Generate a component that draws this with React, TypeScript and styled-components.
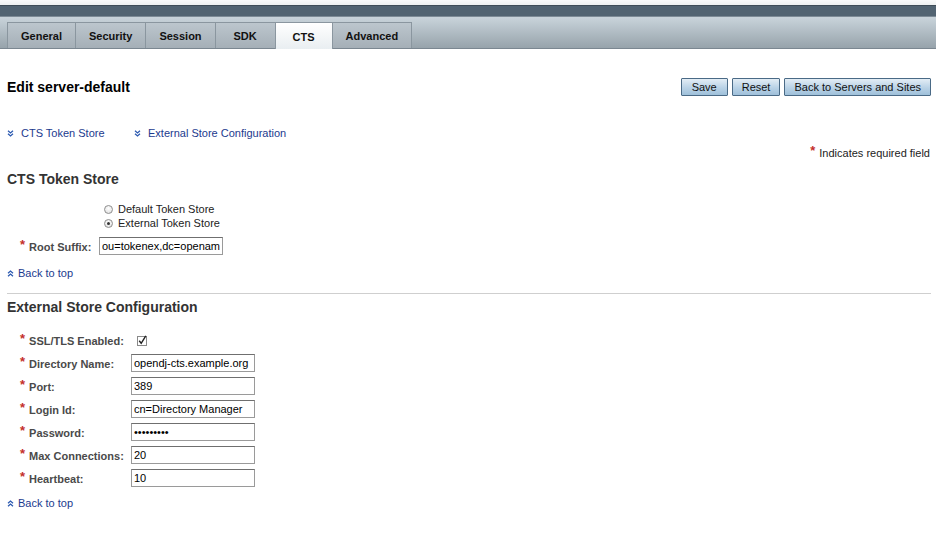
import React from "react";
import styled, { createGlobalStyle } from "styled-components";

const Global = createGlobalStyle`
  html, body { margin: 0; padding: 0; background: #fff; }
  body { font-family: "Liberation Sans", Arial, Helvetica, sans-serif; font-size: 11px; color: #000; }
`;

const Masthead = styled.div`
  height: 5px;
  background: linear-gradient(#fafbfb, #eef1f1);
`;

const DarkBand = styled.div`
  height: 10px;
  background: #526472;
  border-top: 1px solid #3f4d58;
`;

const TabBar = styled.div`
  height: 33px;
  box-sizing: border-box;
  background: linear-gradient(#c9d4db, #97a3ab);
  border-top: 1px solid #7d8b96;
  border-bottom: 1px solid #7b8791;
  padding-left: 7px;
  display: flex;
  align-items: flex-end;
`;

const Tab = styled.div<{ $active?: boolean }>`
  height: ${(p) => (p.$active ? "27px" : "26px")};
  margin-bottom: ${(p) => (p.$active ? "-1px" : "0")};
  box-sizing: border-box;
  padding: 0 13px;
  min-width: ${(p) => (p.$active ? "58px" : "61px")};
  display: flex;
  align-items: center;
  justify-content: center;
  font-weight: bold;
  font-size: 11px;
  color: #111;
  border: 1px solid #8a969f;
  border-bottom: none;
  margin-left: -1px;
  padding-top: ${(p) => (p.$active ? "2px" : "0")};
  background: ${(p) =>
    p.$active
      ? "linear-gradient(#ffffff, #e9eef1)"
      : "linear-gradient(#bcc6cd, #a5afb7)"};
  &:first-child { margin-left: 0; }
`;

const Content = styled.div`
  padding: 29px 5px 0 7px;
`;

const HeaderRow = styled.div`
  display: flex;
  justify-content: space-between;
  align-items: center;
  height: 18px;
`;

const Title = styled.h1`
  margin: 0;
  font-size: 14px;
  line-height: 18px;
  font-weight: bold;
  color: #000;
`;

const Buttons = styled.div`
  display: flex;
  gap: 4px;
`;

const Button = styled.button`
  height: 18px;
  min-width: 47px;
  box-sizing: border-box;
  padding: 0 9px;
  font-family: "Liberation Sans", Arial, sans-serif;
  font-size: 11px;
  color: #111;
  border: 1px solid #4a6a86;
  border-radius: 1px;
  background: linear-gradient(#e3edf5, #b9d2e6 55%, #9fc0da);
  cursor: pointer;
`;

const NavRow = styled.div`
  display: flex;
  margin-top: 30px;
  height: 14px;
  align-items: center;
`;

const NavLink = styled.a<{ $width?: number }>`
  display: flex;
  align-items: center;
  gap: 7px;
  width: ${(p) => (p.$width ? `${p.$width}px` : "auto")};
  color: #1c3a8e;
  text-decoration: none;
  font-size: 11px;
  line-height: 14px;
  cursor: pointer;
`;

const RequiredNote = styled.div`
  margin-top: 6px;
  text-align: right;
  font-size: 11px;
  line-height: 14px;
  color: #222;
  padding-right: 1px;
`;

const Star = styled.span`
  color: #c4302b;
  font-weight: bold;
  font-size: 13px;
  margin-right: 4px;
  position: relative;
  top: -2px;
`;

const SectionTitle = styled.h2<{ $mt: number }>`
  margin: ${(p) => p.$mt}px 0 0 0;
  font-size: 14px;
  line-height: 18px;
  font-weight: bold;
  color: #333;
`;

const RadioGroup = styled.div`
  margin-top: 14px;
  padding-left: 97px;
  display: flex;
  flex-direction: column;
`;

const RadioRow = styled.label`
  display: flex;
  align-items: center;
  gap: 5px;
  height: 14px;
  font-size: 11px;
  color: #222;
`;

const RadioDot = styled.span<{ $checked?: boolean }>`
  width: 9px;
  height: 9px;
  box-sizing: border-box;
  border-radius: 50%;
  border: 1px solid #8e8e8e;
  background: radial-gradient(circle at 50% 35%, #ffffff, #dcdcdc);
  display: flex;
  align-items: center;
  justify-content: center;
  &::after {
    content: "";
    width: 3px;
    height: 3px;
    border-radius: 50%;
    background: ${(p) => (p.$checked ? "#333" : "transparent")};
  }
`;

const FieldRow = styled.div<{ $mt: number }>`
  display: flex;
  align-items: center;
  height: 18px;
  margin-top: ${(p) => p.$mt}px;
`;

const Label = styled.div<{ $width: number }>`
  width: ${(p) => p.$width}px;
  box-sizing: border-box;
  padding-left: 13px;
  font-weight: bold;
  font-size: 11px;
  color: #4a4a4a;
  white-space: nowrap;
`;

const Input = styled.input`
  width: 124px;
  height: 18px;
  box-sizing: border-box;
  border: 1px solid #9a9a9a;
  border-top-color: #6f6f6f;
  padding: 0 2px;
  font-family: "Liberation Sans", Arial, sans-serif;
  font-size: 11px;
  color: #000;
  background: #fff;
  outline: none;
`;

const CheckWrap = styled.span`
  margin-left: 6px;
  display: flex;
  align-items: center;
`;

const BackLink = styled(NavLink)<{ $mt: number }>`
  margin-top: ${(p) => p.$mt}px;
  gap: 4px;
  height: 14px;
`;

const Rule = styled.hr`
  margin: 13px 0 0 0;
  border: none;
  border-top: 1px solid #cfcfcf;
  height: 0;
`;

const Fields = styled.div`
  margin-top: 15px;
  display: flex;
  flex-direction: column;
  gap: 5px;
`;

const DoubleDown = () => (
  <svg width="7" height="7" viewBox="0 0 7 7" fill="none" stroke="#2b59b0" strokeWidth="1.3">
    <polyline points="1,0.8 3.5,3 6,0.8" />
    <polyline points="1,3.8 3.5,6 6,3.8" />
  </svg>
);

const DoubleUp = () => (
  <svg width="7" height="7" viewBox="0 0 7 7" fill="none" stroke="#2b59b0" strokeWidth="1.3">
    <polyline points="1,3.2 3.5,1 6,3.2" />
    <polyline points="1,6.2 3.5,4 6,6.2" />
  </svg>
);

const CheckBox = () => (
  <svg width="10" height="11" viewBox="0 0 10 11">
    <rect x="0.5" y="1.5" width="9" height="9" fill="#fff" stroke="#8a8a8a" />
    <polyline points="2.2,5.8 4.2,8.3 8.8,0.8" fill="none" stroke="#222" strokeWidth="1.4" />
  </svg>
);

const tabs = ["General", "Security", "Session", "SDK", "CTS", "Advanced"];

const fields: { label: string; value?: string; type?: string; check?: boolean }[] = [
  { label: "SSL/TLS Enabled:", check: true },
  { label: "Directory Name:", value: "opendj-cts.example.org" },
  { label: "Port:", value: "389" },
  { label: "Login Id:", value: "cn=Directory Manager" },
  { label: "Password:", value: "secret123", type: "password" },
  { label: "Max Connections:", value: "20" },
  { label: "Heartbeat:", value: "10" },
];

export default function App() {
  return (
    <>
      <Global />
      <Masthead />
      <DarkBand />
      <TabBar>
        {tabs.map((t) => (
          <Tab key={t} $active={t === "CTS"}>
            {t}
          </Tab>
        ))}
      </TabBar>
      <Content>
        <HeaderRow>
          <Title>Edit server-default</Title>
          <Buttons>
            <Button>Save</Button>
            <Button>Reset</Button>
            <Button>Back to Servers and Sites</Button>
          </Buttons>
        </HeaderRow>
        <NavRow>
          <NavLink $width={127}>
            <DoubleDown />
            CTS Token Store
          </NavLink>
          <NavLink>
            <DoubleDown />
            External Store Configuration
          </NavLink>
        </NavRow>
        <RequiredNote>
          <Star>*</Star>Indicates required field
        </RequiredNote>
        <SectionTitle $mt={10}>CTS Token Store</SectionTitle>
        <RadioGroup>
          <RadioRow>
            <RadioDot />
            Default Token Store
          </RadioRow>
          <RadioRow>
            <RadioDot $checked />
            External Token Store
          </RadioRow>
        </RadioGroup>
        <FieldRow $mt={7}>
          <Label $width={92}>
            <Star>*</Star>Root Suffix:
          </Label>
          <Input readOnly value="ou=tokenex,dc=openam,dc=forgerock,dc=org" />
        </FieldRow>
        <BackLink $mt={11}>
          <DoubleUp />
          Back to top
        </BackLink>
        <Rule />
        <SectionTitle $mt={4}>External Store Configuration</SectionTitle>
        <Fields>
          {fields.map((f) => (
            <FieldRow key={f.label} $mt={0}>
              <Label $width={124}>
                <Star>*</Star>
                {f.label}
              </Label>
              {f.check ? (
                <CheckWrap>
                  <CheckBox />
                </CheckWrap>
              ) : (
                <Input readOnly type={f.type || "text"} value={f.value} />
              )}
            </FieldRow>
          ))}
        </Fields>
        <BackLink $mt={9}>
          <DoubleUp />
          Back to top
        </BackLink>
      </Content>
    </>
  );
}
